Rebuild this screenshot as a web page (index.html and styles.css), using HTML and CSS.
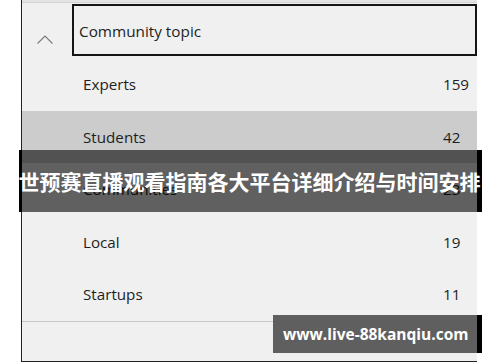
FILE: index.html
```html
<!DOCTYPE html>
<html lang="en">
<head>
<meta charset="utf-8">
<link rel="stylesheet" href="styles.css">
</head>
<body>
<div class="panel">
  <div class="top-strip"></div>
  <div class="header">
    <div class="chevron">
      <svg width="16" height="9" viewBox="0 0 16 9"><path d="M0.5 8.5 L8 1 L15.5 8.5" fill="none" stroke="#777" stroke-width="1.1"/></svg>
    </div>
    <div class="search-box">Community topic</div>
  </div>
  <ul class="list">
    <li class="row"><span class="label">Experts</span><span class="count">159</span></li>
    <li class="row selected"><span class="label">Students</span><span class="count">42</span></li>
    <li class="row"><span class="label">Communities</span><span class="count">23</span></li>
    <li class="row"><span class="label">Local</span><span class="count">19</span></li>
    <li class="row"><span class="label">Startups</span><span class="count">11</span></li>
  </ul>
  <div class="footer"></div>
</div>
<div class="banner">世预赛直播观看指南各大平台详细介绍与时间安排</div>
<div class="url-badge">www.live-88kanqiu.com</div>
</body>
</html>
```
FILE: styles.css
```css
html, body {
  margin: 0;
  padding: 0;
  background: #ffffff;
}
body {
  width: 500px;
  height: 362px;
  overflow: hidden;
  position: relative;
  font-family: "Open Sans", "Noto Sans", sans-serif;
  color: #1e1e1e;
}
.panel {
  margin-left: 21px;
  width: 455px;
  height: 361px;
  background: #f0f0f0;
  border-left: 1px solid #222;
  border-bottom: 1px solid #222;
  display: flex;
  flex-direction: column;
}
.top-strip {
  height: 2px;
  background: #e4e4e4;
  border-bottom: 1px solid #d2d2d2;
}
.header {
  display: flex;
  height: 55px;
  padding-top: 1px;
  box-sizing: border-box;
}
.chevron {
  width: 50px;
  display: flex;
  justify-content: center;
  padding-top: 31px;
  box-sizing: border-box;
  padding-right: 4px;
}
.chevron svg { display: block; }
.search-box {
  flex: 1;
  height: 52px;
  box-sizing: border-box;
  border: 2px solid #151515;
  padding-left: 5px;
  font-size: 15.3px;
  line-height: 48px;
  padding-top: 1px;
}
.list {
  list-style: none;
  margin: 0;
  padding: 0;
}
.row {
  height: 52.5px;
  display: flex;
  align-items: center;
  padding-left: 61px;
  font-size: 15.2px;
}
.row.selected { background: #cccccc; }
.label { width: 360px; }
.footer {
  flex: 1;
  border-top: 1px solid #c8c8c8;
}
.banner {
  position: absolute;
  left: 19px;
  top: 150px;
  width: 463px;
  height: 62px;
  box-sizing: border-box;
  background: rgba(0, 0, 0, 0.6);
  border-left: 3px solid #000;
  border-right: 5px solid #000;
  color: #fff;
  font-family: "Noto Sans CJK SC", sans-serif;
  font-weight: bold;
  font-size: 21px;
  line-height: 62px;
  white-space: nowrap;
  display: flex;
  justify-content: center;
}
.url-badge {
  position: absolute;
  left: 273px;
  top: 315px;
  width: 209px;
  height: 38px;
  box-sizing: border-box;
  background: #5f5f5f;
  border-right: 5px solid #000;
  color: #fff;
  font-family: "Open Sans", "Noto Sans", sans-serif;
  font-weight: bold;
  font-size: 15.5px;
  line-height: 38px;
  padding-left: 10px;
  white-space: nowrap;
}
```
